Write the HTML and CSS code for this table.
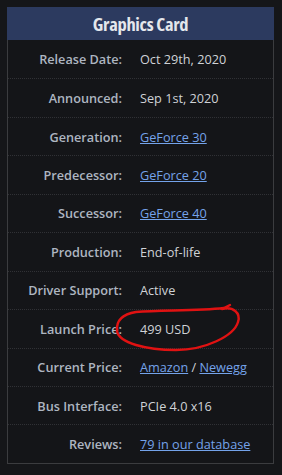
FILE: index.html
```html
<!DOCTYPE html>
<html lang="en">
<head>
  <meta charset="UTF-8">
  <title>Graphics Card</title>
  <link rel="stylesheet" href="styles.css">
</head>
<body>

  <div class="card">
    <h2 class="card-title">Graphics Card</h2>

    <div class="row"><span class="label">Release Date:</span><span class="value">Oct 29th, 2020</span></div>
    <div class="row"><span class="label">Announced:</span><span class="value">Sep 1st, 2020</span></div>
    <div class="row"><span class="label">Generation:</span><span class="value"><a href="#">GeForce 30</a></span></div>
    <div class="row"><span class="label">Predecessor:</span><span class="value"><a href="#">GeForce 20</a></span></div>
    <div class="row"><span class="label">Successor:</span><span class="value"><a href="#">GeForce 40</a></span></div>
    <div class="row"><span class="label">Production:</span><span class="value">End-of-life</span></div>
    <div class="row"><span class="label">Driver Support:</span><span class="value">Active</span></div>
    <div class="row"><span class="label">Launch Price:</span><span class="value">499 USD</span></div>
    <div class="row"><span class="label">Current Price:</span><span class="value"><a href="#">Amazon</a> / <a href="#">Newegg</a></span></div>
    <div class="row"><span class="label">Bus Interface:</span><span class="value">PCIe 4.0 x16</span></div>
    <div class="row"><span class="label">Reviews:</span><span class="value"><a href="#">79 in our database</a></span></div>

    <!-- red marker circle someone drew over the launch price -->
    <svg class="scribble" width="282" height="475" viewBox="0 0 282 475">
      <path d="M222,309 C233,306 241,313 238,322 C234,336 205,350 176,350 C146,350 119,343 117,331 C116,320 123,314 136,312 C162,310 196,311 224,308 L230,305"
            fill="none" stroke="#e01212" stroke-width="2.4" stroke-linecap="round"/>
    </svg>
  </div>

</body>
</html>
```

FILE: styles.css
```css
body { margin: 0; padding: 7px; background: #151619; font-family: "Open Sans", "Noto Sans", sans-serif; font-size: 12.7px; }
.card { width: 267px; height: 457px; box-sizing: border-box; border: 1px solid #3b3c3f; border-top: none; background: #141518; }
.card-title { margin: 0 -1px; height: 33px; line-height: 33px; background: #2c3a5f; color: #e4e7ec; text-align: center; font-size: 18.5px; font-weight: 700; font-stretch: 75%; letter-spacing: -0.3px; }
.row { display: grid; grid-template-columns: 114px 1fr; column-gap: 18px; align-items: center; height: 38.45px; box-sizing: border-box; }
.row + .row { border-top: 1px dotted #303135; }
.label { text-align: right; color: #aeb6c1; font-weight: 600; }
.value { color: #cfd2d6; }
.value a { color: #74a3ea; text-decoration: underline; }
.scribble { position: absolute; left: 0; top: 0; pointer-events: none; }
```
